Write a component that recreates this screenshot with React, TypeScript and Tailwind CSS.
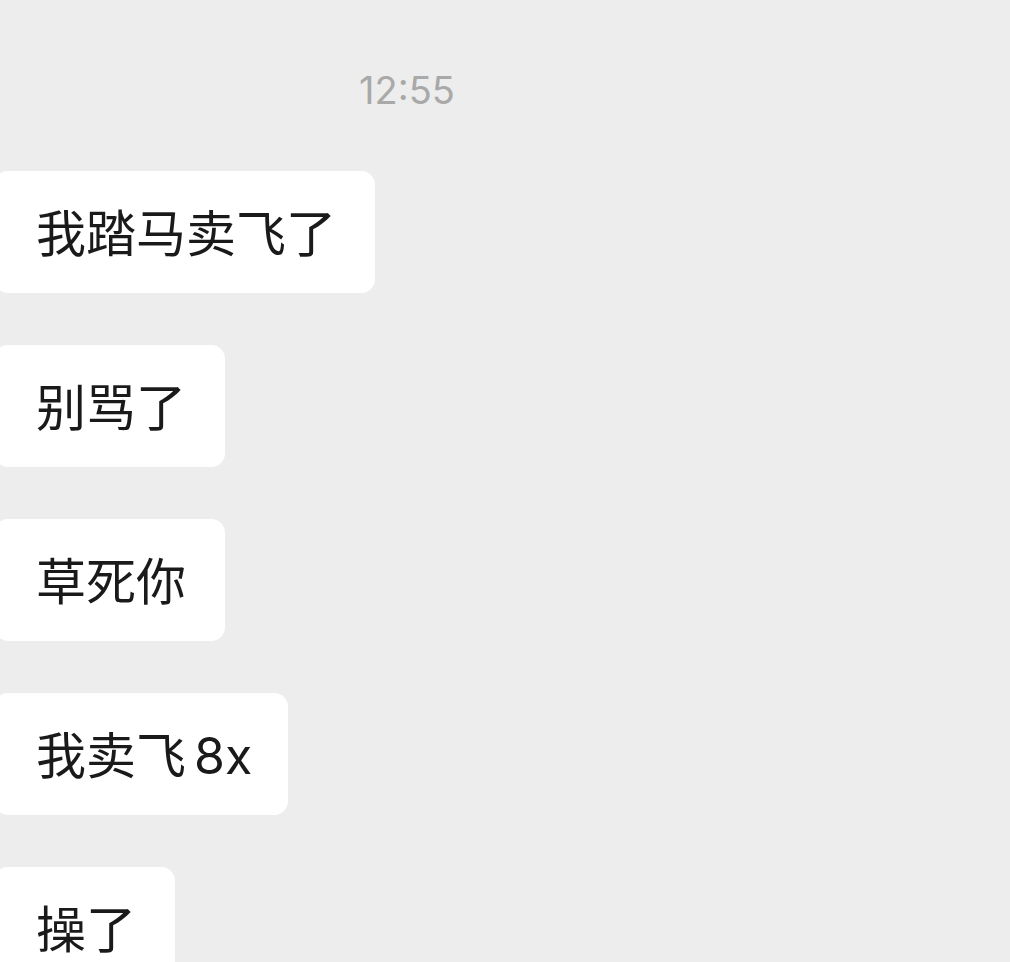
import React from "react";

const msgs: [string, string?][] = [["我踏马卖飞了"], ["别骂了"], ["草死你"], ["我卖飞", "8x"], ["操了"]];

export default function App() {
  return (
    <div
      className="w-[1010px] h-[962px] overflow-hidden bg-[#ededed]"
      style={{ fontFamily: 'Inter, "Noto Sans CJK SC", "Noto Sans", sans-serif' }}
    >
      <div className="w-[814px] pt-[63px] text-center text-[38px] leading-[54px] text-[#a9a9a9]">
        12:55
      </div>
      <div className="mt-[54px] flex flex-col items-start gap-[52px]">
        {msgs.map(([m, latin]) => (
          <div
            key={m}
            className="-ml-[6px] h-[122px] rounded-[14px] bg-white pl-[42px] pr-[39px] pt-[4px] flex items-center text-[50px] leading-none text-[#1a1a1a] whitespace-pre"
          >
            {m}
            {latin && <span className="ml-[8px] -mr-[3px]">{latin}</span>}
          </div>
        ))}
      </div>
    </div>
  );
}
